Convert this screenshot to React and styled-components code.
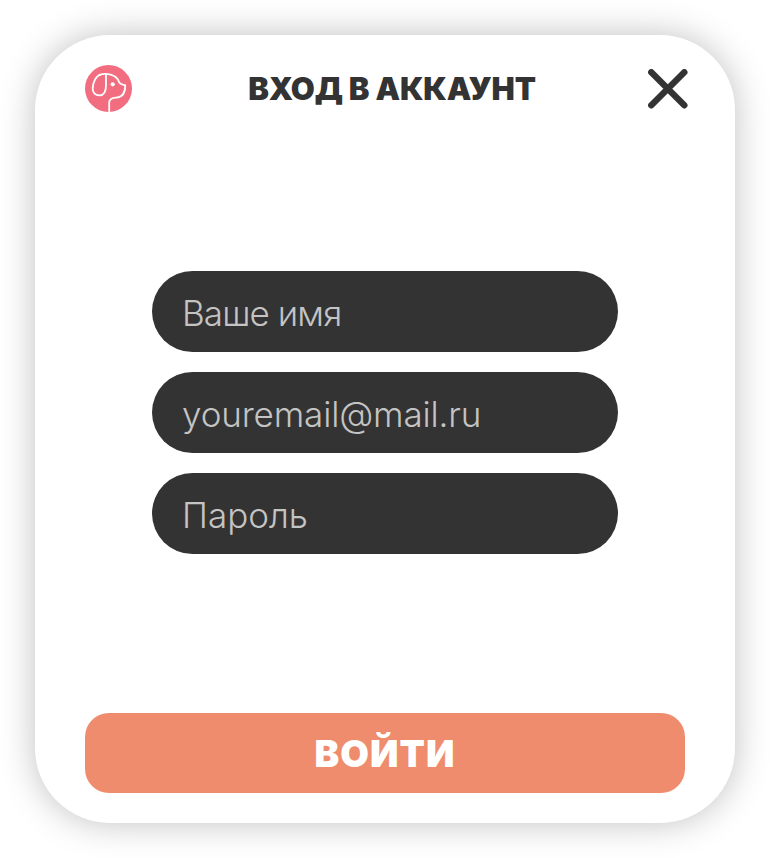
import React from "react";
import styled, { createGlobalStyle } from "styled-components";

const GlobalStyle = createGlobalStyle`
  * { box-sizing: border-box; }
  body { margin: 0; background: #fff; font-family: Inter, "Open Sans", sans-serif; }
`;

const Page = styled.main`
  width: 770px;
  height: 858px;
  padding: 35px;
  overflow: hidden;
`;

const Card = styled.form`
  width: 700px;
  height: 788px;
  padding: 30px 50px;
  display: flex;
  flex-direction: column;
  justify-content: space-between;
  border-radius: 75px;
  background: #fff;
  box-shadow: 0 0 35px rgba(0, 0, 0, 0.25);
`;

const Header = styled.header`
  height: 47px;
  display: flex;
  align-items: center;
  justify-content: space-between;
`;

const Title = styled.h1`
  margin: 0;
  padding-left: 4px;
  color: #333;
  font-size: 31px;
  line-height: 47px;
  font-weight: 900;
  letter-spacing: -0.15px;
  white-space: nowrap;
`;

const CloseButton = styled.button`
  width: 40px;
  height: 40px;
  margin-right: -3px;
  padding: 0;
  display: block;
  border: 0;
  background: none;
`;

const Icon = styled.svg`
  display: block;
  flex: none;
`;

const Fields = styled.div`
  display: flex;
  flex-direction: column;
  align-items: center;
  gap: 20px;
  margin-bottom: 1px;
`;

const Field = styled.input`
  width: 466px;
  height: 81px;
  padding: 3px 30px 0;
  border: 0;
  border-radius: 41px;
  outline: 0;
  background: #333;
  color: #c4c4c4;
  font-family: inherit;
  font-size: 35px;
  font-weight: 300;
  letter-spacing: ${({ $tracking }) => $tracking}px;
  &::placeholder { color: #c4c4c4; opacity: 1; }
`;

const SubmitButton = styled.button`
  height: 80px;
  padding: 1px 0 0;
  border: 0;
  border-radius: 24px;
  background: #ef8c6e;
  color: #fff;
  font-family: inherit;
  font-size: 37px;
  font-weight: 900;
  letter-spacing: 1px;
`;

function DogLogo() {
  return (
    <Icon width="47" height="47" viewBox="0 0 47 47" fill="none">
      <circle cx="23.5" cy="23.5" r="23.5" fill="#f16d7f" />
      <g stroke="#fff" strokeWidth="1.8" strokeLinecap="round" strokeLinejoin="round">
        <path d="M21 9.4V20c0 6-2.1 10.4-6.5 10.4-4.5 0-7-3-6.8-7C8 17 11 10.9 15.3 9.6" />
        <path d="M15.3 9.6c2.7-.8 7.5-.7 10.3 0 4.5 1.2 7.3 4.2 8.3 7.1.8 2.5 3.1 2.8 6.3 3.5.2 8.5-3.4 12.1-9.2 12.4-4.7.2-6.8 1.4-6.8 5V47" />
      </g>
      <circle cx="27.7" cy="19.3" r="2.1" fill="#fff" />
    </Icon>
  );
}

function CloseIcon() {
  return (
    <Icon width="40" height="40" viewBox="0 0 40 40">
      <path d="M3.3 3.3 36.3 36.3M36.3 3.3 3.3 36.3" stroke="#333" strokeWidth="6.4" strokeLinecap="round" />
    </Icon>
  );
}

export default function App() {
  return (
    <>
      <GlobalStyle />
      <Page>
        <Card>
          <Header>
            <DogLogo />
            <Title>ВХОД В АККАУНТ</Title>
            <CloseButton type="button" aria-label="Закрыть">
              <CloseIcon />
            </CloseButton>
          </Header>
          <Fields>
            <Field type="text" placeholder="Ваше имя" $tracking={-0.9} />
            <Field type="email" placeholder="youremail@mail.ru" $tracking={-0.15} />
            <Field type="password" placeholder="Пароль" $tracking={0} />
          </Fields>
          <SubmitButton type="submit">ВОЙТИ</SubmitButton>
        </Card>
      </Page>
    </>
  );
}
